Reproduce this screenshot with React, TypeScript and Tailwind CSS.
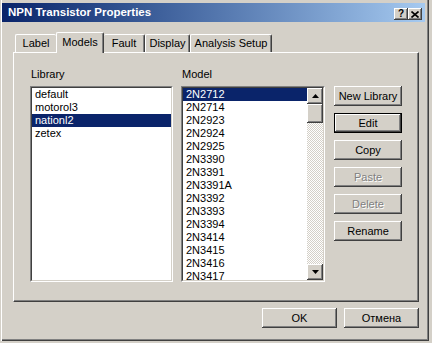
import React from 'react'

const FONT = "font-['Liberation_Sans',Arial,sans-serif]"
const RAISED = 'bg-[#d4d0c8] shadow-[inset_-1px_-1px_0_#404040,inset_1px_1px_0_#ffffff,inset_-2px_-2px_0_#808080]'

const libraries = ['default', 'motorol3', 'nationl2', 'zetex']
const models = [
  '2N2712', '2N2714', '2N2923', '2N2924', '2N2925', '2N3390', '2N3391', '2N3391A',
  '2N3392', '2N3393', '2N3394', '2N3414', '2N3415', '2N3416', '2N3417',
]

const tabs = [
  { label: 'Label', w: 'w-[41px]', cls: 'border-l border-t border-white' },
  { label: 'Models', w: 'w-[48px]', active: true },
  { label: 'Fault', w: 'w-[41px]', cls: 'border-t border-r border-white border-r-[#404040] shadow-[inset_-1px_0_0_#808080]' },
  { label: 'Display', w: 'w-[45px]', cls: 'border-l border-t border-r border-white border-r-[#404040] shadow-[inset_-1px_0_0_#808080]' },
  { label: 'Analysis Setup', w: 'w-[82px]', cls: 'border-l border-t border-r border-white border-r-[#404040] shadow-[inset_-1px_0_0_#808080]' },
]

// two-pixel sunken frame, as on a classic list box
function Sunken({ className, children }: { className: string; children: React.ReactNode }) {
  return (
    <div className={`border border-t-[#808080] border-l-[#808080] border-r-white border-b-white ${className}`}>
      <div className="h-full border border-t-[#404040] border-l-[#404040] border-r-[#d4d0c8] border-b-[#d4d0c8] bg-white overflow-hidden">
        {children}
      </div>
    </div>
  )
}

function Arrow({ up }: { up?: boolean }) {
  return (
    <div className={`h-[16px] w-[16px] flex items-center justify-center ${RAISED}`}>
      <svg width="7" height="4" viewBox="0 0 7 4">
        <polygon points={up ? '3.5,0 7,4 0,4' : '0,0 7,0 3.5,4'} fill="#000" />
      </svg>
    </div>
  )
}

function Button({ label, disabled, isDefault, w = 'w-[68px]' }: { label: string; disabled?: boolean; isDefault?: boolean; w?: string }) {
  const text = disabled ? 'text-[#808080] [text-shadow:1px_1px_0_#ffffff]' : 'text-black'
  if (isDefault) {
    return (
      <div className={`${w} h-[20px] border border-black`}>
        <div className={`h-full flex items-center justify-center ${RAISED} ${text}`}>{label}</div>
      </div>
    )
  }
  return <div className={`${w} h-[20px] flex items-center justify-center ${RAISED} ${text}`}>{label}</div>
}

export default function App() {
  return (
    <div className={`w-[432px] h-[343px] bg-[#d4d0c8] text-[11px] leading-[13px] text-black ${FONT}`}>
      <div className="w-[429px] h-[341px] flex flex-col pt-[3px] pl-[2px] pr-[4px] shadow-[inset_1px_0_0_#d4d0c8,inset_2px_0_0_#ffffff,inset_-1px_-1px_0_#404040,inset_-2px_-2px_0_#808080]">
        {/* Title bar */}
        <div className="h-[19px] flex items-start justify-between bg-gradient-to-r from-[#0a246a] to-[#a6caf0] pl-[6px] pr-[3px]">
          <span className="pt-[3px] text-[11.5px] font-bold text-white">NPN Transistor Properties</span>
          <div className="flex mt-[5px]">
            <div className={`w-[14px] h-[12px] flex items-center justify-center text-[10px] leading-none font-bold ${RAISED}`}>?</div>
            <div className={`w-[14px] h-[12px] flex items-center justify-center ${RAISED}`}>
              <svg width="8" height="7" viewBox="0 0 8 7">
                <path d="M0.5 0.5 L7.5 6.5 M7.5 0.5 L0.5 6.5" stroke="#000" strokeWidth="1.6" />
              </svg>
            </div>
          </div>
        </div>

        <div className="flex flex-col pl-[11px] pr-[6px]">
          {/* Tabs */}
          <div className="mt-[10px] h-[20px] flex items-end pl-[2px]">
            {tabs.map(t =>
              t.active ? (
                <div
                  key={t.label}
                  className={`${t.w} relative z-10 h-[21px] -mb-[1px] pt-[3px] text-center bg-[#d4d0c8] border-l border-t border-r border-white border-r-[#404040] rounded-t-[2px] shadow-[inset_-1px_0_0_#808080]`}
                >
                  {t.label}
                </div>
              ) : (
                <div key={t.label} className={`${t.w} h-[18px] pt-[2px] text-center rounded-t-[2px] ${t.cls}`}>
                  {t.label}
                </div>
              )
            )}
          </div>

          {/* Panel */}
          <div className="h-[250px] flex border-l border-t border-white border-r border-b border-r-[#404040] border-b-[#404040] shadow-[inset_-1px_-1px_0_#808080] pl-[16px] pt-[15px]">
            <div className="flex flex-col w-[143px]">
              <div className="pl-[1px] mb-[5px]">Library</div>
              <Sunken className="h-[196px]">
                <div className="flex flex-col">
                  {libraries.map(l => (
                    <div key={l} className={`h-[13px] pl-[3px] ${l === 'nationl2' ? 'bg-[#0a246a] text-white' : ''}`}>{l}</div>
                  ))}
                </div>
              </Sunken>
            </div>

            <div className="flex flex-col w-[144px] ml-[8px]">
              <div className="pl-[1px] mb-[5px]">Model</div>
              <Sunken className="h-[196px]">
                <div className="flex h-full">
                  <div className="flex-1 flex flex-col">
                    {models.map((m, i) => (
                      <div key={m} className={`h-[13px] shrink-0 pl-[3px] ${i === 0 ? 'bg-[#0a246a] text-white' : ''}`}>{m}</div>
                    ))}
                  </div>
                  <div className="w-[16px] flex flex-col bg-[repeating-conic-gradient(#d4d0c8_0_25%,#ffffff_0_50%)] bg-[length:2px_2px]">
                    <Arrow up />
                    <div className={`h-[19px] w-[16px] ${RAISED}`} />
                    <div className="flex-1" />
                    <Arrow />
                  </div>
                </div>
              </Sunken>
            </div>

            <div className="flex flex-col gap-[7px] ml-[9px] pt-[18px]">
              <Button label="New Library" />
              <Button label="Edit" isDefault />
              <Button label="Copy" />
              <Button label="Paste" disabled />
              <Button label="Delete" disabled />
              <Button label="Rename" />
            </div>
          </div>

          {/* Dialog buttons */}
          <div className="mt-[6px] flex justify-end gap-[7px]">
            <Button label="OK" w="w-[75px]" />
            <Button label="Отмена" w="w-[75px]" />
          </div>
        </div>
      </div>
    </div>
  )
}
